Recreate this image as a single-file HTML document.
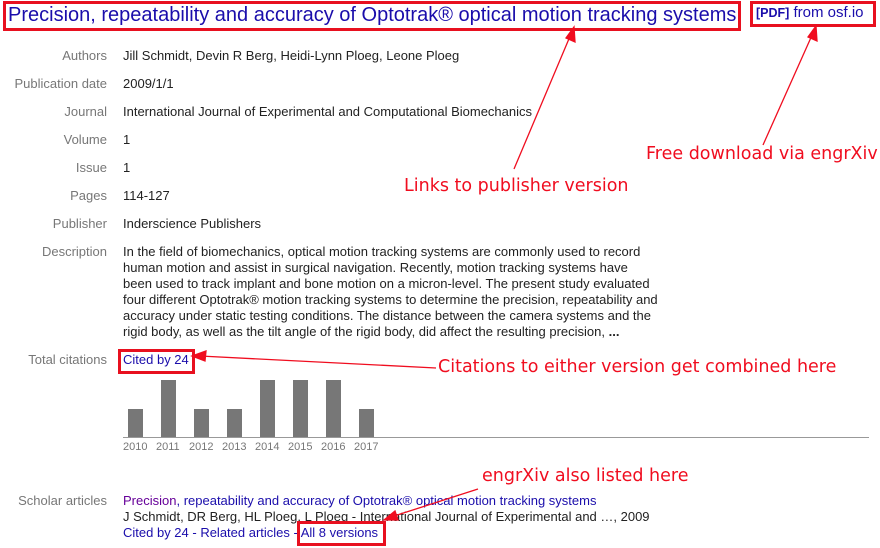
<!DOCTYPE html>
<html><head><meta charset="utf-8"><style>
body{margin:0;width:880px;height:548px;background:#fff;position:relative;overflow:hidden;font-family:"Liberation Sans",Arial,sans-serif;font-size:13px;color:#222}
.a{position:absolute;white-space:nowrap}
.l{position:absolute;right:773px;color:#777;white-space:nowrap;text-align:right}
.v{position:absolute;left:123px;white-space:nowrap}
.lk{color:#1a0dab}
.ann{position:absolute;color:#f00d1f;font-family:"DejaVu Sans",sans-serif;font-size:17.5px;white-space:nowrap}
.box{position:absolute;border:3px solid #e8101f}
.bar{position:absolute;width:15px;background:#777;bottom:111px}
.yr{position:absolute;top:441px;font-size:11px;color:#777}
</style></head><body>
<div class="a lk" style="left:8px;top:3px;font-size:20px;line-height:24px">Precision, repeatability and accuracy of Optotrak® optical motion tracking systems</div>
<div class="box" style="left:3px;top:1px;width:732px;height:24px"></div>
<div class="a lk" style="left:756px;top:4px;font-size:15px"><span style="font-size:12.5px;font-weight:bold;color:#1a0dab">[PDF]</span> from osf.io</div>
<div class="box" style="left:750px;top:1px;width:120px;height:20px"></div>

<div class="l" style="top:48px">Authors</div><div class="v" style="top:48px">Jill Schmidt, Devin R Berg, Heidi-Lynn Ploeg, Leone Ploeg</div>
<div class="l" style="top:76px">Publication date</div><div class="v" style="top:76px">2009/1/1</div>
<div class="l" style="top:104px">Journal</div><div class="v" style="top:104px">International Journal of Experimental and Computational Biomechanics</div>
<div class="l" style="top:132px">Volume</div><div class="v" style="top:132px">1</div>
<div class="l" style="top:160px">Issue</div><div class="v" style="top:160px">1</div>
<div class="l" style="top:188px">Pages</div><div class="v" style="top:188px">114-127</div>
<div class="l" style="top:216px">Publisher</div><div class="v" style="top:216px">Inderscience Publishers</div>
<div class="l" style="top:244px">Description</div>
<div class="v" style="top:244px;line-height:16px">In the field of biomechanics, optical motion tracking systems are commonly used to record<br>human motion and assist in surgical navigation. Recently, motion tracking systems have<br>been used to track implant and bone motion on a micron-level. The present study evaluated<br>four different Optotrak® motion tracking systems to determine the precision, repeatability and<br>accuracy under static testing conditions. The distance between the camera systems and the<br>rigid body, as well as the tilt angle of the rigid body, did affect the resulting precision, <b>...</b></div>
<div class="l" style="top:352px">Total citations</div><div class="v lk" style="top:352px">Cited by 24</div>
<div class="box" style="left:118px;top:349px;width:71px;height:19px"></div>

<div class="bar" style="left:128px;height:28px"></div>
<div class="bar" style="left:161px;height:57px"></div>
<div class="bar" style="left:194px;height:28px"></div>
<div class="bar" style="left:227px;height:28px"></div>
<div class="bar" style="left:260px;height:57px"></div>
<div class="bar" style="left:293px;height:57px"></div>
<div class="bar" style="left:326px;height:57px"></div>
<div class="bar" style="left:359px;height:28px"></div>
<div style="position:absolute;left:123px;top:437px;width:746px;height:1px;background:#999"></div>
<div class="yr" style="left:123px">2010</div><div class="yr" style="left:156px">2011</div><div class="yr" style="left:189px">2012</div><div class="yr" style="left:222px">2013</div><div class="yr" style="left:255px">2014</div><div class="yr" style="left:288px">2015</div><div class="yr" style="left:321px">2016</div><div class="yr" style="left:354px">2017</div>

<div class="l" style="top:493px">Scholar articles</div>
<div class="v" style="top:493px;line-height:16px"><span class="lk" style="color:#660099">Precision</span><span class="lk">, repeatability and accuracy of Optotrak® optical motion tracking systems</span><br>J Schmidt, DR Berg, HL Ploeg, L Ploeg - International Journal of Experimental and …, 2009<br><span class="lk">Cited by 24 - Related articles - All 8 versions</span></div>
<div class="box" style="left:297px;top:521px;width:83px;height:19px"></div>

<div class="ann" style="left:646px;top:144px">Free download via engrXiv</div>
<div class="ann" style="left:404px;top:176px">Links to publisher version</div>
<div class="ann" style="left:438px;top:357px">Citations to either version get combined here</div>
<div class="ann" style="left:482px;top:466px">engrXiv also listed here</div>

<svg style="position:absolute;left:0;top:0" width="880" height="548">
<g stroke="#f00d1f" stroke-width="1.3" fill="#f00d1f">
<line x1="514" y1="169" x2="571" y2="34"/><polygon points="574,27 575,42 566,38"/>
<line x1="763" y1="145" x2="813" y2="33"/><polygon points="816,26 817,41 808,37"/>
<line x1="436" y1="368" x2="200" y2="356"/><polygon points="192,356 206,351 205,361"/>
<line x1="478" y1="489" x2="391" y2="517"/><polygon points="384,520 395,511 398,520"/>
</g></svg>
</body></html>
